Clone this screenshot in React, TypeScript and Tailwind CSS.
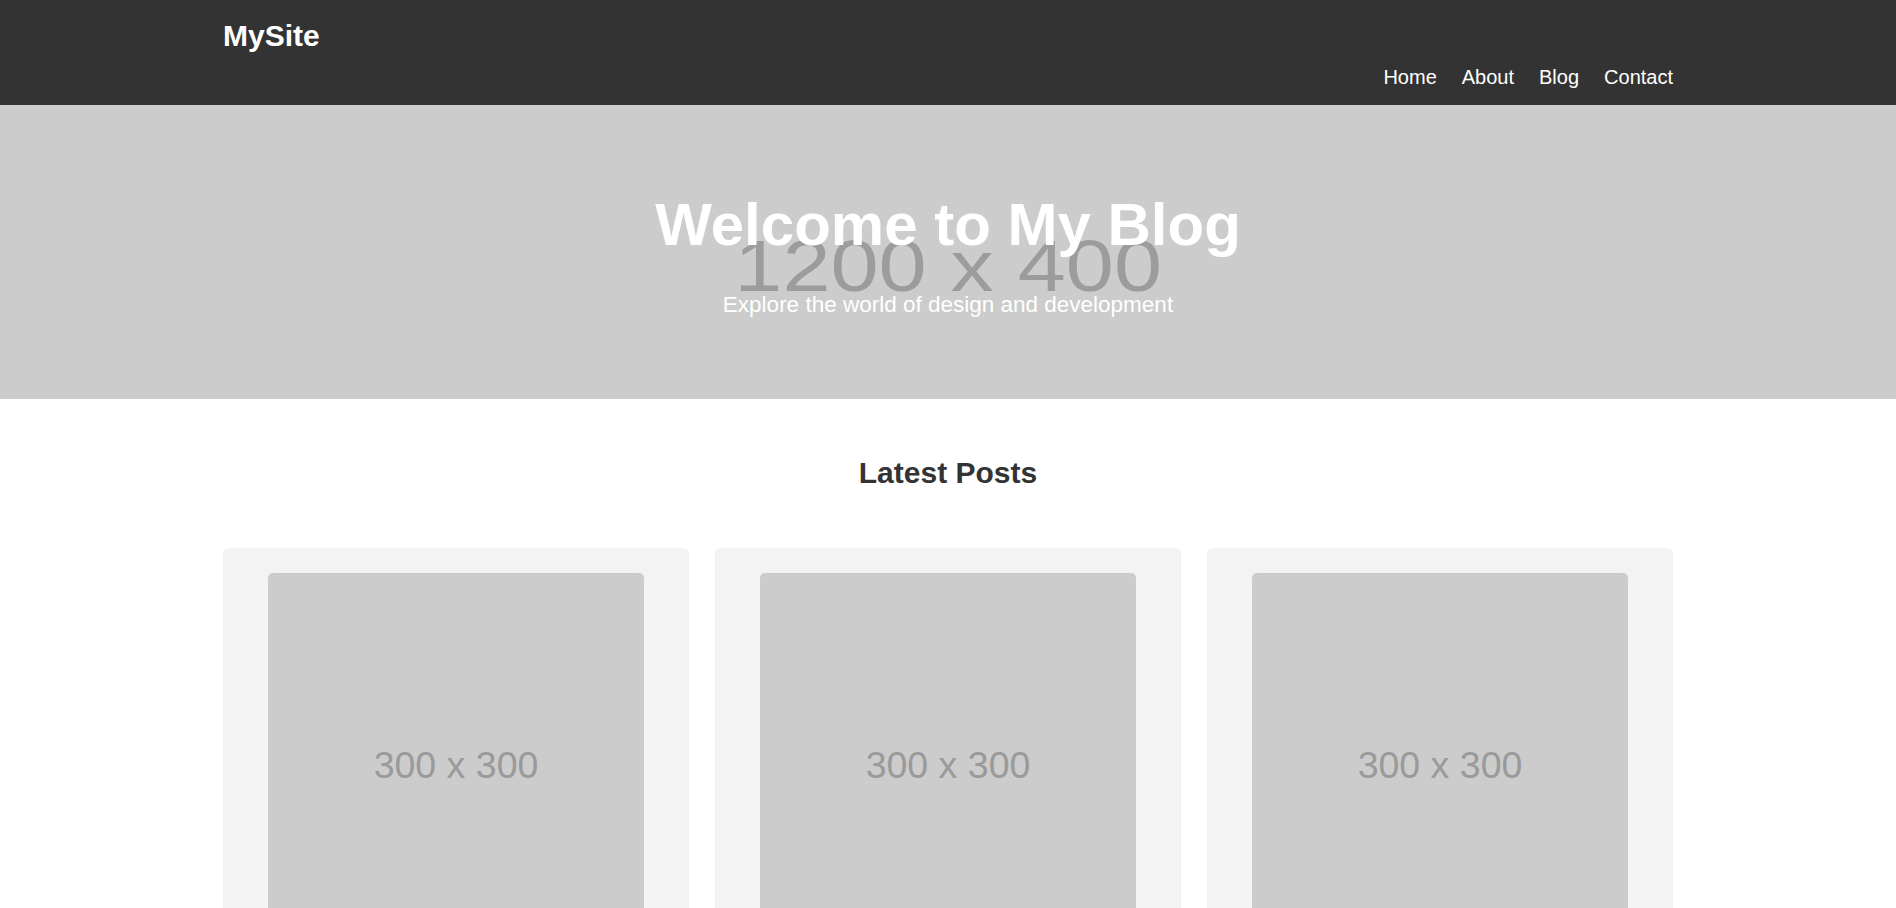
import React from "react";

function PostCard() {
  return (
    <div className="bg-[#f3f3f3] rounded-[6px] pt-[25px] pb-[25px] flex justify-center">
      <div className="w-[376px] h-[386px] bg-[#cccccc] rounded-[5px] flex items-center justify-center">
        <span className="text-[37.5px] text-[#9a9a9a] leading-none">300 x 300</span>
      </div>
    </div>
  );
}

export default function App() {
  return (
    <div className="min-h-screen bg-white" style={{ fontFamily: '"Liberation Sans", Arial, sans-serif' }}>
      <header className="bg-[#333333] h-[105px]">
        <div className="w-[1450px] mx-auto h-full flex justify-between">
          <div className="pt-[21px]">
            <div className="text-white font-bold text-[30px] leading-[29px]">MySite</div>
          </div>
          <nav className="self-end pb-[18px]">
            <ul className="flex gap-[25px] text-white text-[20px] leading-[20px]">
              <li>Home</li>
              <li>About</li>
              <li>Blog</li>
              <li>Contact</li>
            </ul>
          </nav>
        </div>
      </header>

      <section className="relative bg-[#cccccc] h-[294px] overflow-hidden">
        <div className="absolute inset-x-0 top-[125px] flex justify-center">
          <span className="text-[72px] leading-[72px] text-[#9c9c9c] scale-x-[1.2]">1200 x 400</span>
        </div>
        <div className="relative pt-[85px] text-center text-white">
          <h1 className="font-bold text-[60px] leading-[70px]">Welcome to My Blog</h1>
          <p className="mt-[32px] text-[22.5px] leading-[26px]">Explore the world of design and development</p>
        </div>
      </section>

      <section className="w-[1450px] mx-auto pt-[57px]">
        <h2 className="text-center font-bold text-[30px] leading-[34px] text-[#333333]">Latest Posts</h2>
        <div className="mt-[58px] grid grid-cols-3 gap-[26px]">
          <PostCard />
          <PostCard />
          <PostCard />
        </div>
      </section>
    </div>
  );
}
